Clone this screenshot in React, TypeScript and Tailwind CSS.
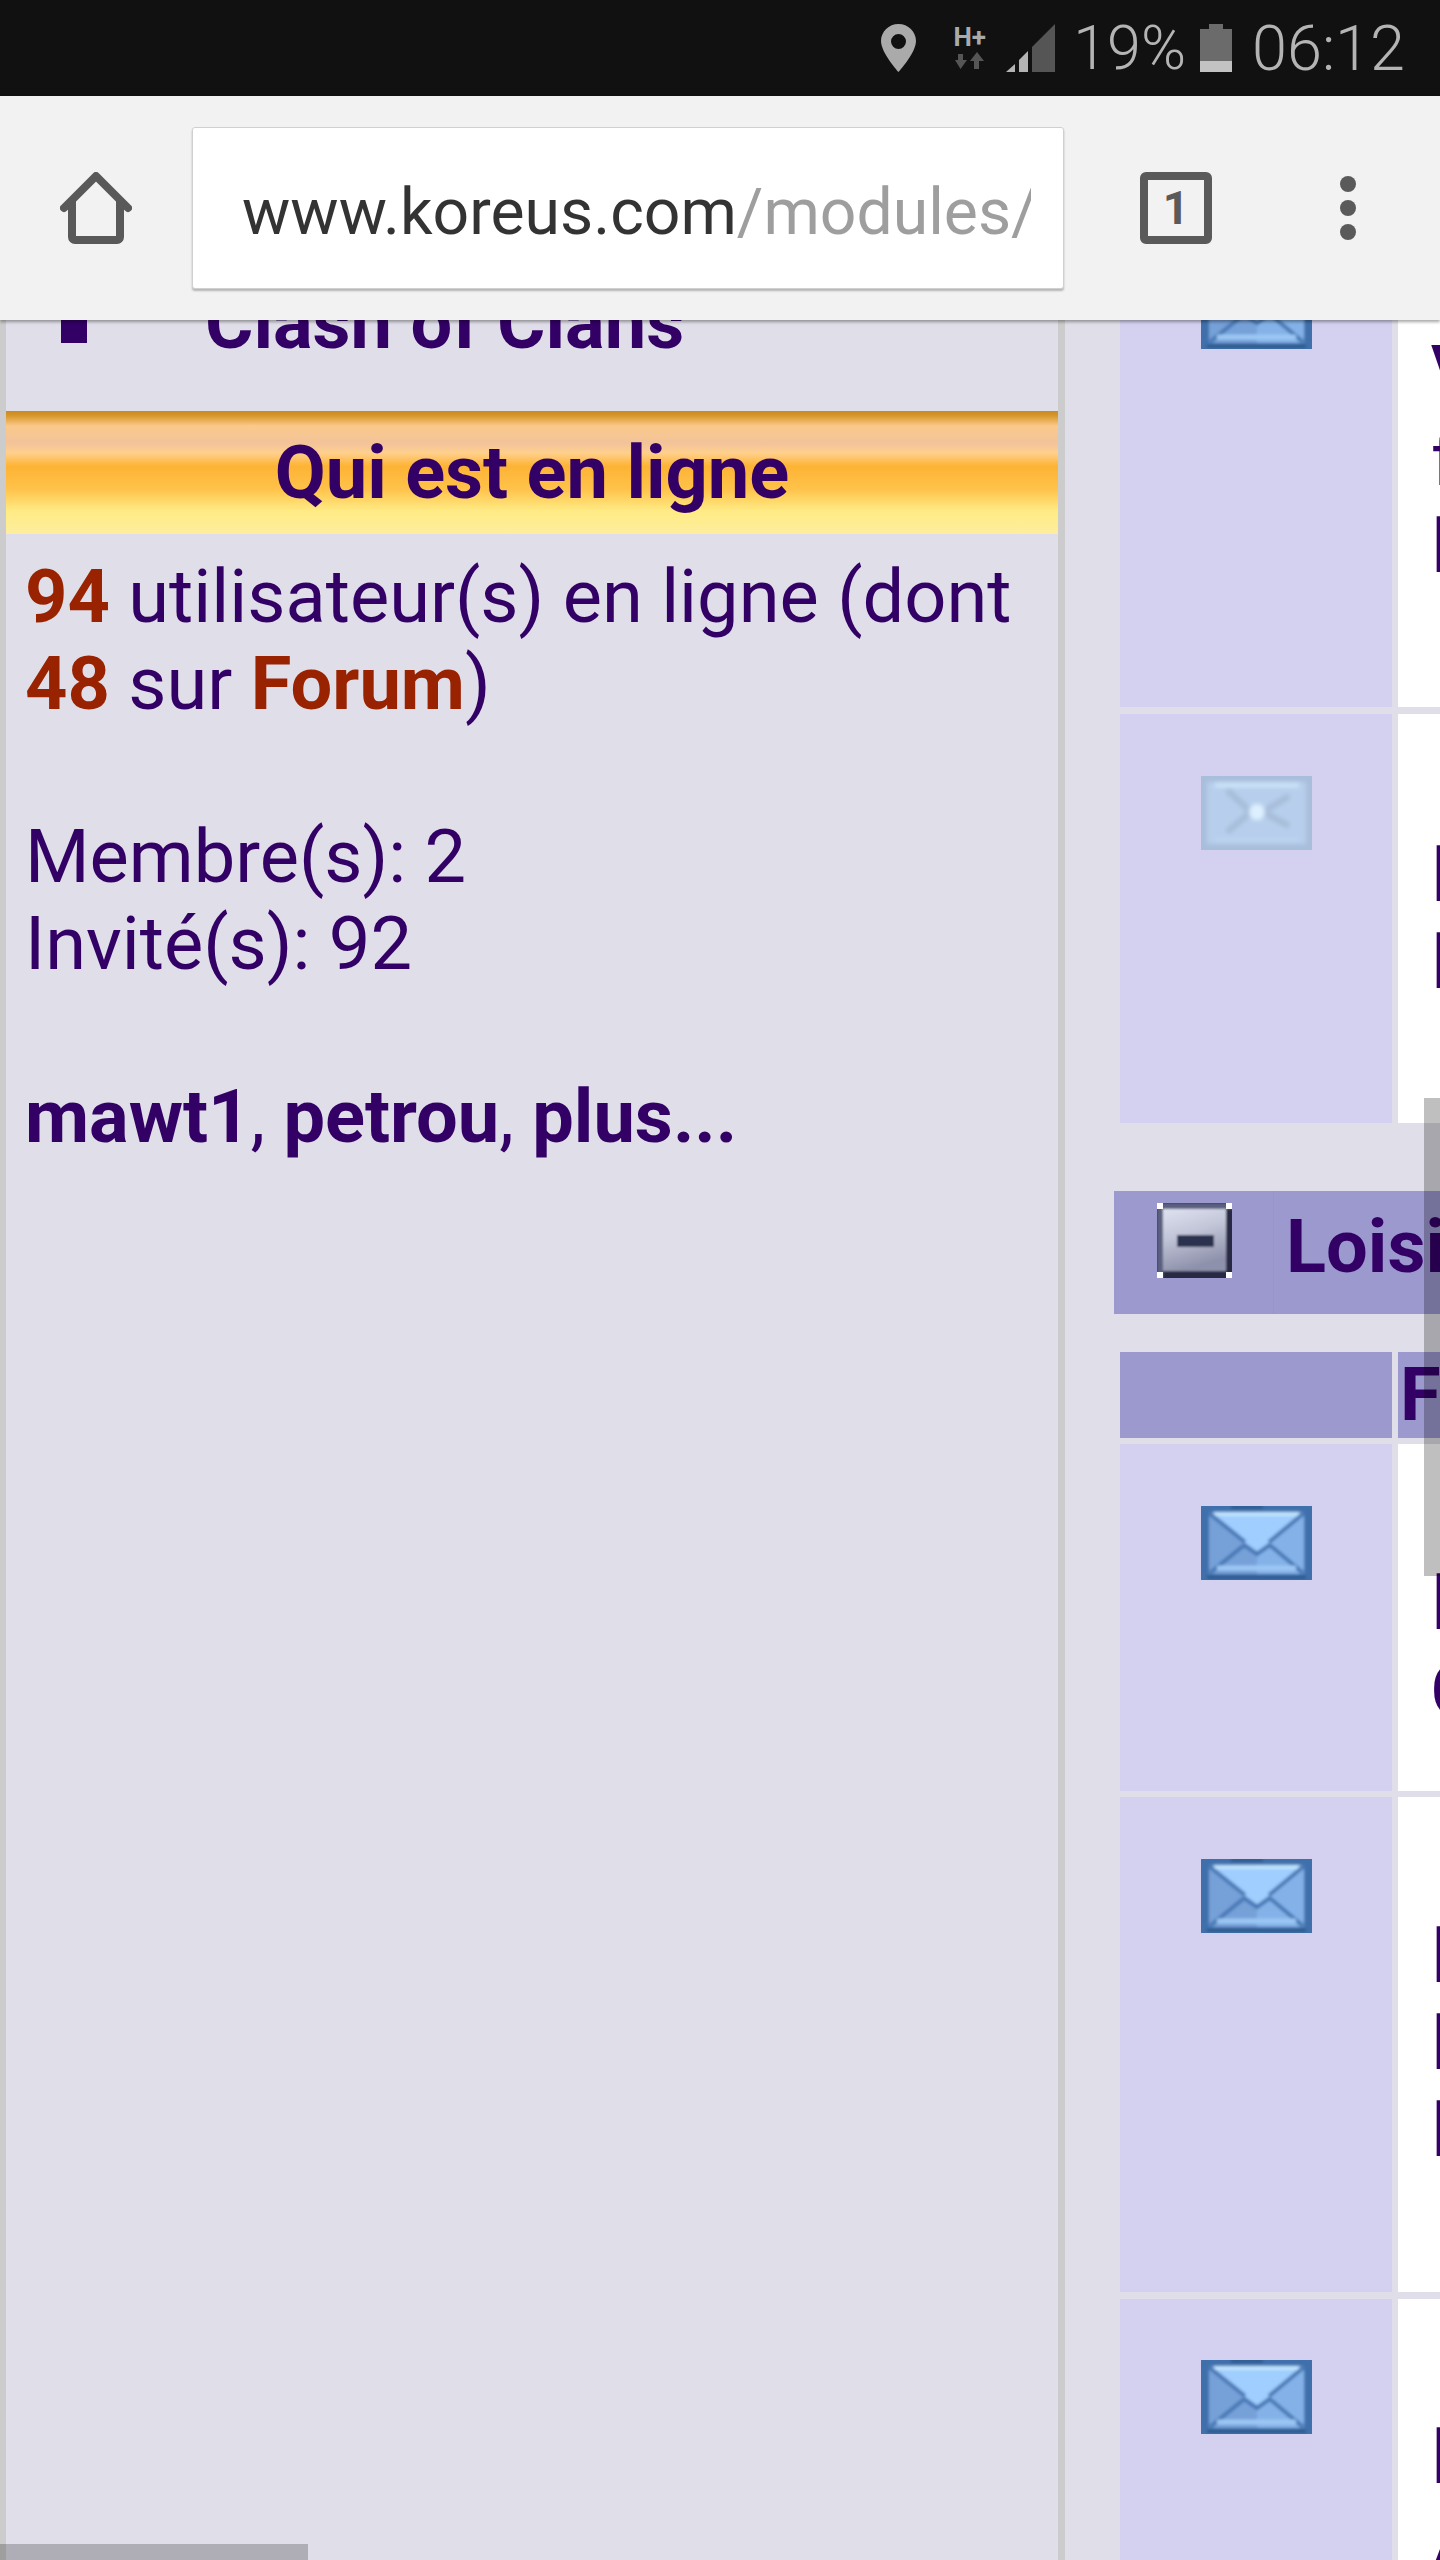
const purple = "text-[#330066]";
const red = "text-[#992200]";

function Envelope() {
  return (
    <svg viewBox="0 0 111 74" preserveAspectRatio="none" className="block w-[111px] h-[74px]">
      <defs>
        <filter id="soft" x="0" y="0" width="1" height="1">
          <feGaussianBlur stdDeviation="1.7" />
        </filter>
      </defs>
      <rect width="111" height="74" fill="#4f80c0" />
      <g filter="url(#soft)">
        <rect x="-2" y="-2" width="115" height="78" fill="#3f6fab" />
        <path d="M8 6H56V68H8Z" fill="#76a0d8" />
        <path d="M56 6H103V68H56Z" fill="#84b2e8" />
        <path d="M12 9H99L56 50Z" fill="#a0ceff" />
        <path d="M13 8H98" stroke="#c4e8ff" strokeWidth="3.500" />
        <path d="M8 7 44 36M103 7 68 36M9 67 42 40M102 67 70 40M42 38 56 48 70 38" stroke="#4677b4" strokeWidth="4" fill="none" />
        <path d="M16 62H95" stroke="#9cc8f4" strokeWidth="5" />
        <path d="M6 71H105" stroke="#2a5a8c" strokeWidth="3.500" />
        <path d="M30 1H62" stroke="#2a5a8c" strokeWidth="3.500" />
      </g>
    </svg>
  );
}

function ReadEnvelope() {
  return (
    <svg viewBox="0 0 111 74" preserveAspectRatio="none" className="block w-[111px] h-[74px]">
      <defs>
        <filter id="softRead" x="0" y="0" width="1" height="1">
          <feGaussianBlur stdDeviation="2" />
        </filter>
      </defs>
      <rect width="111" height="74" fill="#a9c0dc" />
      <g filter="url(#softRead)">
        <rect x="-2" y="-2" width="115" height="78" fill="#a8bedb" />
        <rect x="6" y="6" width="99" height="62" fill="#b7cfec" />
        <path d="M14 9H98" stroke="#d0e8fb" strokeWidth="4" />
        <path d="M26 14 50 36 26 56M88 20 62 36 88 50" stroke="#a6bcd8" strokeWidth="6" fill="none" />
        <circle cx="56" cy="36" r="8" fill="#dcf0ff" />
        <path d="M14 64H98" stroke="#bcd4f0" strokeWidth="4" />
      </g>
    </svg>
  );
}

function Row({ height, iconClass, read, children, padTop }: { height: string; iconClass: string; read?: boolean; children: React.ReactNode; padTop: string }) {
  return (
    <div className={`flex gap-[6px] ${height}`}>
      <div className="w-[272px] shrink-0 bg-[#d4d0f0] flex justify-center items-start overflow-hidden">
        <div className={iconClass}>{read ? <ReadEnvelope /> : <Envelope />}</div>
      </div>
      <div className={`flex-1 min-w-0 overflow-hidden bg-white pl-[33px] text-[74px] leading-[87px] ${purple} ${padTop}`}>{children}</div>
    </div>
  );
}

export default function App() {
  return (
    <div className="w-[1440px] h-[2560px] overflow-hidden relative flex flex-col bg-[#e0dfe9] font-['Roboto',sans-serif]">
      <div className="h-[96px] shrink-0 bg-[#111111] flex items-center justify-end text-[#b4b4b4] text-[63px] font-[350] leading-none pr-[35px]">
        <svg viewBox="0 0 35 48" className="w-[35px] h-[48px] mr-[37px]">
          <path fillRule="evenodd" fill="#aaaaaa" d="M17.500 0C7.800 0 0 7.600 0 17c0 12 17.500 31 17.500 31S35 29 35 17C35 7.600 27.200 0 17.500 0Zm0 10a7.500 7.500 0 1 1 0 15 7.500 7.500 0 0 1 0-15Z" />
        </svg>
        <div className="w-[33px] h-[48px] mr-[20px] flex flex-col items-center">
          <span className="text-[26px] font-bold leading-[26px] text-[#aaaaaa]">H+</span>
          <svg viewBox="0 0 30 20" className="w-[30px] h-[20px]">
            <path d="M3 4h5v6h4l-6.500 9L0 10h3ZM19 19h5v-8h5l-7-9-7 9h4Z" fill="#555555" />
          </svg>
        </div>
        <svg viewBox="0 0 49 48" className="w-[49px] h-[48px] mr-[18px]">
          <path d="M26 23 49 0v48H26Z" fill="#555555" />
          <path d="M13 36l9-9v21h-9Z" fill="#b4b4b4" />
          <path d="M0 48l9-8v8Z" fill="#b4b4b4" />
        </svg>
        <span className="mr-[14px] text-[61px]">19%</span>
        <svg viewBox="0 0 32 48" className="w-[32px] h-[48px] mr-[20px]">
          <path d="M0 5h9V0h14v5h9v32H0Z" fill="#6b6b6b" />
          <rect y="37" width="32" height="11" fill="#c2c2c2" />
        </svg>
        <span>06:12</span>
      </div>

      <div className="relative z-10 h-[224px] shrink-0 bg-[#f2f2f2] shadow-[0_2px_3px_rgba(0,0,0,0.35)] flex items-center">
        <div className="w-[192px] shrink-0 flex justify-center">
          <svg viewBox="0 0 72 72" className="w-[72px] h-[72px]" fill="none" stroke="#595959" strokeWidth="8" strokeLinecap="round" strokeLinejoin="round">
            <path d="M4 36 36 4l32 32" />
            <path d="M12 30v35a3 3 0 0 0 3 3h42a3 3 0 0 0 3-3V30" />
          </svg>
        </div>
        <div className="w-[872px] h-[162px] bg-white rounded-[3px] border border-[#d0d0d0] shadow-[0_2px_2px_rgba(0,0,0,0.25)] pl-[49px] pr-[32px] pt-[9px] flex items-center">
          <div className="overflow-hidden whitespace-nowrap text-[64.300px] leading-none text-[#333333]">
            www.koreus.com<span className="text-[#9e9e9e]">/modules/newbb/index.php</span>
          </div>
        </div>
        <div className="ml-[76px] w-[72px] h-[72px] border-[8px] border-[#5a5a5a] rounded-[6px] flex items-center justify-center text-[#5a5a5a] text-[46px] font-bold leading-none">1</div>
        <div className="ml-[128px] flex flex-col gap-[8px]">
          <div className="w-[16px] h-[16px] rounded-full bg-[#5a5a5a]" />
          <div className="w-[16px] h-[16px] rounded-full bg-[#5a5a5a]" />
          <div className="w-[16px] h-[16px] rounded-full bg-[#5a5a5a]" />
        </div>
      </div>

      <div className="flex-1 flex overflow-hidden min-h-0 border-l-[6px] border-[#cccccc]">
        <div className="w-[1052px] shrink-0">
          <div className={`flex items-start h-[91px] ${purple}`}>
            <span className="ml-[55px] w-[26px] h-[26px] -mt-[3px] bg-[#330066] shrink-0" />
            <span className="ml-[118px] text-[74px] font-bold leading-[74px] -mt-[34px] whitespace-nowrap">Clash of Clans</span>
          </div>
          <div className="h-[123px] text-center bg-[linear-gradient(to_bottom,#c98a20_0,#d9982e_5px,#fbc98a_15px,#f2c39a_32px,#ffd08c_42px,#fdb334_55px,#ffc24a_78px,#ffeb85_100px,#fdee9e_123px)]">
            <span className={`text-[74px] font-bold leading-[123px] ${purple}`}>Qui est en ligne</span>
          </div>
          <div className={`pl-[19px] pt-[19px] text-[74px] leading-[87px] ${purple}`}>
            <div><b className={red}>94</b> utilisateur(s) en ligne (dont</div>
            <div><b className={red}>48</b> sur <b className={red}>Forum</b>)</div>
            <div className="h-[86px]" />
            <div>Membre(s): 2</div>
            <div>Invité(s): 92</div>
            <div className="h-[86px]" />
            <div><b>mawt1</b>, <b>petrou</b>, <b>plus...</b></div>
          </div>
        </div>
        <div className="w-[7px] shrink-0 bg-[#cccccc]" />
        <div className="flex-1 min-w-0 pl-[55px]">
          <Row height="h-[387px]" iconClass="-mt-[45px]" padTop="pt-[9px]">
            <b>V</b>
            <div>f</div>
            <div>l</div>
          </Row>
          <div className="h-[7px]" />
          <Row height="h-[409px]" iconClass="mt-[62px]" read padTop="pt-[118px]">
            <div>l</div>
            <div>l</div>
          </Row>
          <div className="h-[68px]" />
          <div className={`flex h-[123px] -ml-[6px] bg-[#9b99ce] ${purple}`}>
            <div className="w-[160px] shrink-0 border-r border-[#9795ca] pl-[43px] pt-[12px]">
              <svg viewBox="0 0 75 75" className="w-[75px] h-[75px]">
                <defs>
                  <linearGradient id="minusFace" x1="0" y1="0" x2="0.3" y2="1">
                    <stop offset="0" stopColor="#dfe2f0" />
                    <stop offset="0.45" stopColor="#c2c6d8" />
                    <stop offset="1" stopColor="#8e91ab" />
                  </linearGradient>
                  <filter id="softMinus" x="0" y="0" width="1" height="1">
                    <feGaussianBlur stdDeviation="0.8" />
                  </filter>
                </defs>
                <rect width="75" height="75" fill="#262b45" />
                <g filter="url(#softMinus)">
                  <rect width="75" height="75" fill="#262b45" />
                  <path d="M0 0h75v6H6v69H0Z" fill="#5c6180" />
                  <rect x="6" y="6" width="63" height="62" fill="url(#minusFace)" />
                  <rect x="20" y="32" width="37" height="12" rx="1" fill="#2c3050" />
                </g>
                <path d="M0 0h6v6H0ZM69 0h6v6h-6ZM0 69h6v6H0ZM69 69h6v6h-6Z" fill="#ffffff" />
              </svg>
            </div>
            <span className="pl-[12px] text-[74px] font-bold leading-[111px]">Loisirs</span>
          </div>
          <div className="h-[38px]" />
          <div className={`flex gap-[6px] h-[86px] ${purple}`}>
            <div className="w-[272px] shrink-0 bg-[#9b99ce]" />
            <div className="flex-1 min-w-0 bg-[#9b99ce] pl-[2px] text-[74px] font-bold leading-[86px] overflow-hidden">Forum</div>
          </div>
          <div className="h-[6px]" />
          <Row height="h-[347px]" iconClass="mt-[62px]" padTop="pt-[116px]">
            <div>l</div>
            <b>C</b>
          </Row>
          <div className="h-[6px]" />
          <Row height="h-[495px]" iconClass="mt-[62px]" padTop="pt-[116px]">
            <div>l</div>
            <div>l</div>
            <div>l</div>
          </Row>
          <div className="h-[7px]" />
          <Row height="h-[300px]" iconClass="mt-[61px]" padTop="pt-[115px]">
            <div>l</div>
            <div>A</div>
          </Row>
        </div>
      </div>

      {/* overlay scrollbars */}
      <div className="absolute left-[1424px] top-[1098px] w-[16px] h-[478px] bg-black/25" />
      <div className="absolute left-0 top-[2544px] w-[308px] h-[16px] bg-black/22" />
    </div>
  );
}
